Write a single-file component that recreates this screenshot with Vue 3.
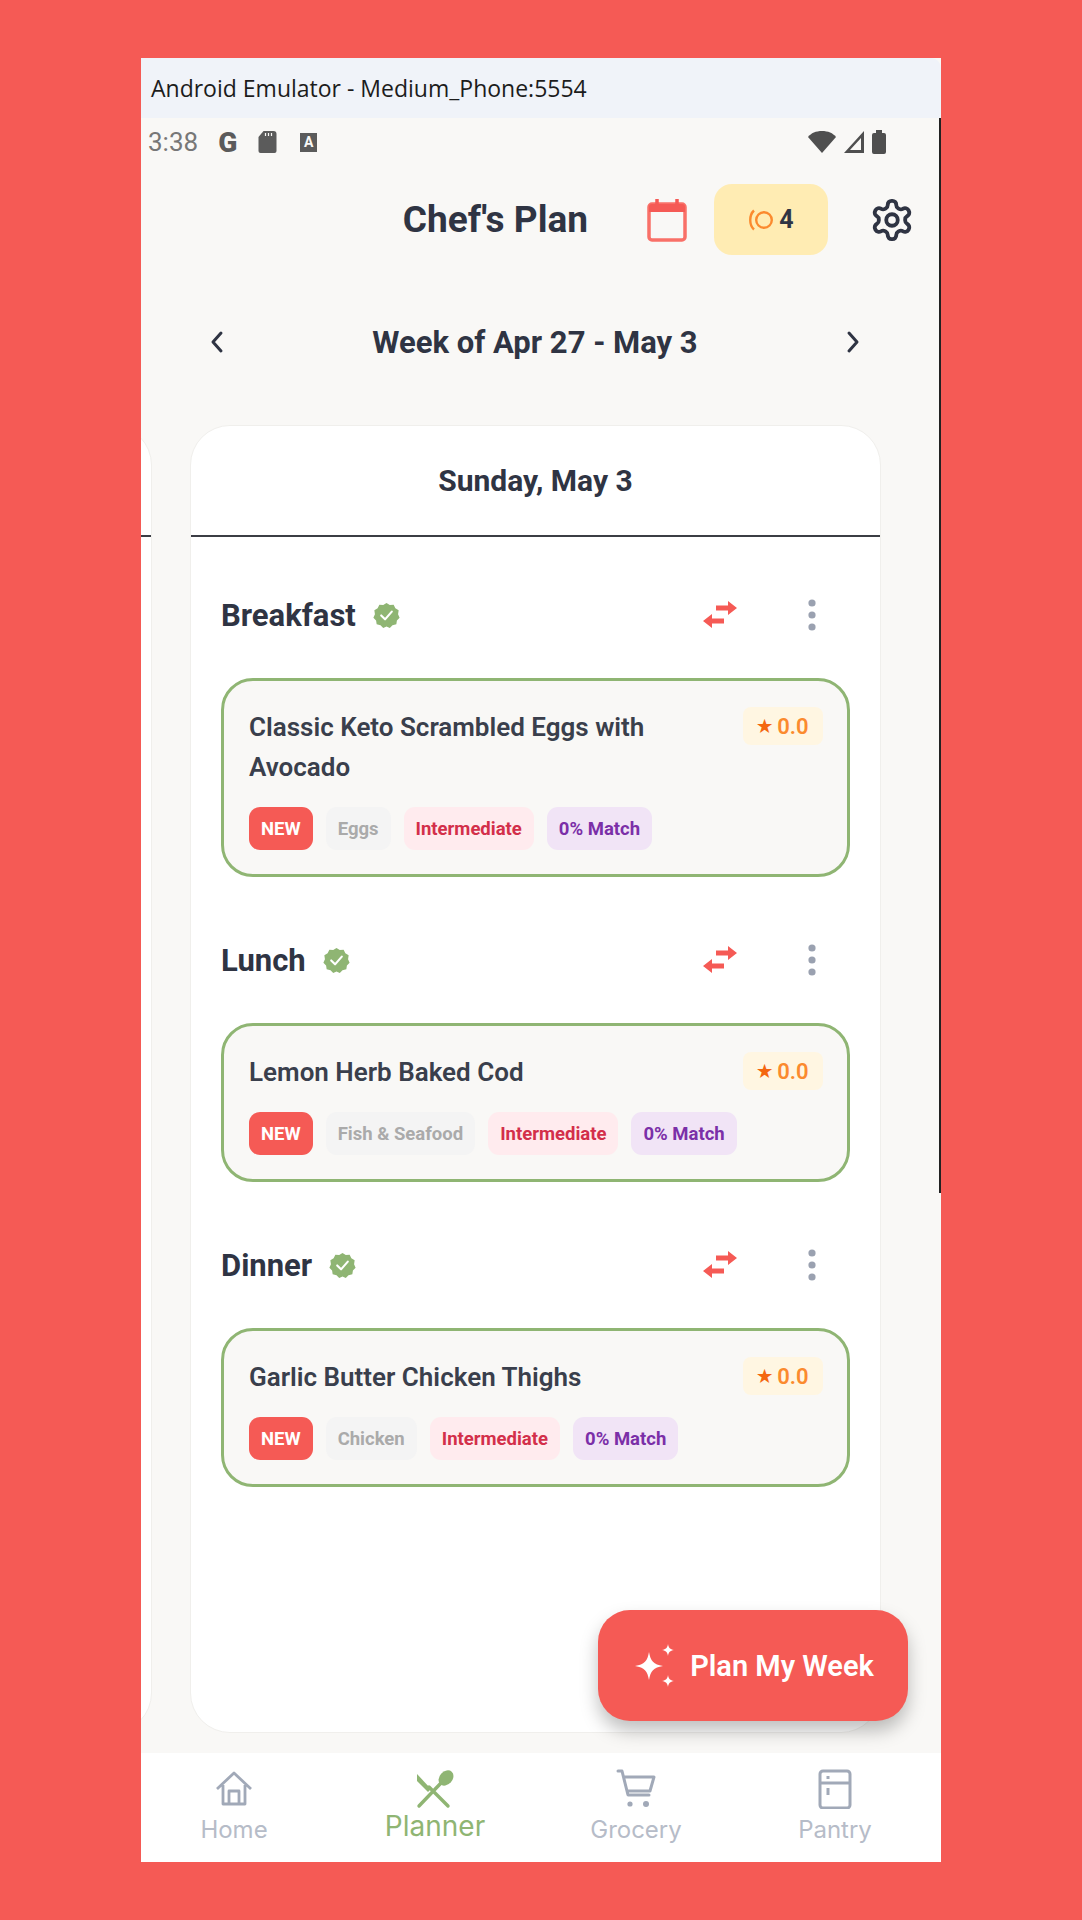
<template>
  <div class="screen">
    <div class="phone">
      <div class="titlebar">Android Emulator - Medium_Phone:5554</div>

      <div class="statusbar">
        <span class="clock">3:38</span>
        <span class="g">G</span>
        <svg class="st-sd" viewBox="0 0 20 24"><path d="M6 1h10a3 3 0 0 1 3 3v17a2 2 0 0 1-2 2H3a2 2 0 0 1-2-2V7z" fill="#5b5b5b" /><path d="M8 3v3M11 3v3M14 3v3" stroke="#f9f8f6" stroke-width="1.2" /></svg>
        <span class="st-a">A</span>
        <span class="st-right">
          <svg width="30" height="26" viewBox="0 0 30 26"><path d="M15 24 1 8C4 4 9 2 15 2s11 2 14 6z" fill="#4f4f4f" /></svg>
          <svg width="24" height="26" viewBox="0 0 24 26"><path d="M22 2v22H2zM19 9 8 21h11z" fill="#4f4f4f" fill-rule="evenodd" /></svg>
          <svg width="16" height="26" viewBox="0 0 16 26"><path d="M5 1h6v3h2a2 2 0 0 1 2 2v17a2 2 0 0 1-2 2H3a2 2 0 0 1-2-2V6a2 2 0 0 1 2-2h2z" fill="#4f4f4f" /></svg>
        </span>
      </div>

      <header class="header">
        <h1>Chef's Plan</h1>
        <svg class="cal" viewBox="0 0 40 44">
          <rect x="2" y="6" width="36" height="36" rx="3" fill="none" stroke="#f97068" stroke-width="3.5" />
          <path d="M2 9a3 3 0 0 1 3-3h30a3 3 0 0 1 3 3v5H2z" fill="#f55a55" />
          <path d="M10 1v7M30 1v7" stroke="#f55a55" stroke-width="3.5" />
        </svg>
        <div class="coins">
          <svg width="26" height="26" viewBox="0 0 26 26" fill="none" stroke="#fb8a2e" stroke-width="2.4">
            <circle cx="16" cy="13" r="7.8" />
            <path d="M6 3.5C1 8 1 18 6 22.5" />
          </svg>
          <span>4</span>
        </div>
        <svg class="gear" viewBox="0 0 24 24" fill="none" stroke="#2f3443" stroke-width="2" stroke-linecap="round" stroke-linejoin="round">
          <path d="M12.22 2h-.44a2 2 0 0 0-2 2v.18a2 2 0 0 1-1 1.73l-.43.25a2 2 0 0 1-2 0l-.15-.08a2 2 0 0 0-2.73.73l-.22.38a2 2 0 0 0 .73 2.73l.15.1a2 2 0 0 1 1 1.72v.51a2 2 0 0 1-1 1.74l-.15.09a2 2 0 0 0-.73 2.73l.22.38a2 2 0 0 0 2.73.73l.15-.08a2 2 0 0 1 2 0l.43.25a2 2 0 0 1 1 1.73V20a2 2 0 0 0 2 2h.44a2 2 0 0 0 2-2v-.18a2 2 0 0 1 1-1.73l.43-.25a2 2 0 0 1 2 0l.15.08a2 2 0 0 0 2.73-.73l.22-.39a2 2 0 0 0-.73-2.73l-.15-.08a2 2 0 0 1-1-1.74v-.5a2 2 0 0 1 1-1.74l.15-.09a2 2 0 0 0 .73-2.73l-.22-.38a2 2 0 0 0-2.73-.73l-.15.08a2 2 0 0 1-2 0l-.43-.25a2 2 0 0 1-1-1.73V4a2 2 0 0 0-2-2z" />
          <circle cx="12" cy="12" r="3" />
        </svg>
      </header>

      <div class="week">
        <svg width="16" height="24" viewBox="0 0 16 24" fill="none" stroke="#2f3443" stroke-width="3" stroke-linecap="round" stroke-linejoin="round"><path d="M12 3 4 12l8 9" /></svg>
        <span>Week of Apr 27 - May 3</span>
        <svg width="16" height="24" viewBox="0 0 16 24" fill="none" stroke="#2f3443" stroke-width="3" stroke-linecap="round" stroke-linejoin="round"><path d="m4 3 8 9-8 9" /></svg>
      </div>

      <div class="pager">
        <section class="day">
          <div class="day-head"></div>
        </section>
        <section class="day">
          <div class="day-head">Sunday, May 3</div>
          <div class="meals">
            <div v-for="m in meals" :key="m.slot" class="meal">
              <div class="meal-head">
                <span class="slot">{{ m.slot }}</span>
                <svg class="check" viewBox="0 0 28 28">
                  <path d="M14 1l3.4 2.2 4-.3 1.8 3.6 3.4 2.1-.6 4 1.6 3.7-2.8 2.9-.6 4-4 .9-2.8 2.9L14 25.4 10.600 27l-2.800-2.900-4-.9-.6-4L.4 16.300 2 12.600l-.6-4 3.400-2.100 1.800-3.600 4 .3z" fill="#8fb573" />
                  <path d="m8.500 14 4 4 7-8" fill="none" stroke="#fff" stroke-width="2.200" stroke-linecap="round" stroke-linejoin="round" />
                </svg>
                <svg class="swap" viewBox="0 0 36 28" fill="#f55a55">
                  <path d="M14 5.500h12V1l9 7-9 7v-4.500H14z" transform="translate(0 -1)" />
                  <path d="M22 17.500H10V13l-9 7 9 7v-4.500h12z" />
                </svg>
                <svg class="dots" viewBox="0 0 8 32" fill="#9aa1b0">
                  <circle cx="4" cy="4" r="3.600" /><circle cx="4" cy="16" r="3.600" /><circle cx="4" cy="28" r="3.600" />
                </svg>
              </div>
              <div class="recipe">
                <div class="recipe-top">
                  <div class="recipe-name">{{ m.name }}</div>
                  <div class="rating"><span class="star">★</span>0.0</div>
                </div>
                <div class="tags">
                  <span class="tag new">NEW</span>
                  <span class="tag cat">{{ m.cat }}</span>
                  <span class="tag lvl">Intermediate</span>
                  <span class="tag match">0% Match</span>
                </div>
              </div>
            </div>
          </div>
        </section>
      </div>

      <button class="fab">
        <svg width="46" height="46" viewBox="0 0 46 46" fill="#fff">
          <path d="M17 9c1.500 9 4.500 12.500 14 14-9.500 1.500-12.500 5-14 14-1.500-9-4.500-12.500-14-14 9.500-1.500 12.500-5 14-14z" />
          <path d="M36 1c.7 4 2 5.300 6 6-4 .7-5.300 2-6 6-.7-4-2-5.300-6-6 4-.7 5.300-2 6-6z" />
          <path d="M36 32c.7 4 2 5.300 6 6-4 .7-5.300 2-6 6-.7-4-2-5.300-6-6 4-.7 5.300-2 6-6z" />
        </svg>
        Plan My Week
      </button>

      <nav class="nav">
        <div class="tab">
          <svg width="40" height="40" viewBox="0 0 40 40" fill="none" stroke="#a1a9b8" stroke-width="2.800" stroke-linejoin="round">
            <path d="M3 20 20 4l17 16M9 16v19h22V16" />
            <path d="M15 35V22h10v13" />
          </svg>
          <span>Home</span>
        </div>
        <div class="tab active">
          <svg width="40" height="40" viewBox="0 0 40 40" fill="none">
            <path d="M2 5 16 20l-3 3L2 12z" fill="#8fb573" />
            <path d="m14 18 19 19M26 14 4 37" stroke="#8fb573" stroke-width="3.400" stroke-linecap="round" />
            <ellipse cx="31" cy="9" rx="6.500" ry="8.500" transform="rotate(42 31 9)" fill="#8fb573" />
          </svg>
          <span>Planner</span>
        </div>
        <div class="tab">
          <svg width="40" height="40" viewBox="0 0 40 40" fill="none" stroke="#a1a9b8" stroke-width="3" stroke-linejoin="round" stroke-linecap="round">
            <path d="M2 2h4l6 24h21M8 8h30l-4 14H12" />
            <circle cx="14" cy="35" r="2.600" fill="#a1a9b8" stroke="none" />
            <circle cx="30" cy="35" r="3" fill="#a1a9b8" stroke="none" />
          </svg>
          <span>Grocery</span>
        </div>
        <div class="tab">
          <svg width="40" height="40" viewBox="0 0 40 40" fill="none" stroke="#a1a9b8" stroke-width="3">
            <rect x="5" y="2" width="30" height="37" rx="3" />
            <path d="M5 14h30M13 7v3M13 19v7" />
          </svg>
          <span>Pantry</span>
        </div>
      </nav>

      <i class="edge"></i>
    </div>
  </div>
</template>

<script setup>
const meals = [
  { slot: 'Breakfast', name: 'Classic Keto Scrambled Eggs with Avocado', cat: 'Eggs' },
  { slot: 'Lunch', name: 'Lemon Herb Baked Cod', cat: 'Fish & Seafood' },
  { slot: 'Dinner', name: 'Garlic Butter Chicken Thighs', cat: 'Chicken' }
]
</script>

<style scoped>
.screen {
  width: 1082px;
  height: 1920px;
  box-sizing: border-box;
  padding: 58px 141px;
  background: #f55a55;
  font-family: Roboto, "Liberation Sans", sans-serif;
  color: #2f3443;
}

.phone {
  position: relative;
  width: 800px;
  height: 1804px;
  display: flex;
  flex-direction: column;
  background: #f9f8f6;
  overflow: hidden;
}

.titlebar {
  height: 60px;
  flex: none;
  display: flex;
  align-items: center;
  padding-left: 10px;
  background: #f0f3f9;
  border-top-right-radius: 10px;
  font-family: "Open Sans", sans-serif;
  font-size: 23px;
  color: #1c1c1c;
}

.statusbar {
  height: 48px;
  flex: none;
  display: flex;
  align-items: center;
  padding: 0 54px 0 7px;
  color: #5b5b5b;
}

.clock { font-size: 26px; color: #777; margin-right: 20px; }
.g { font-size: 28px; font-weight: 900; color: #5b5b5b; margin-right: 20px; }
.st-sd { width: 21px; height: 24px; margin-right: 22px; }
.st-a {
  width: 17px;
  height: 19px;
  background: #5b5b5b;
  color: #f9f8f6;
  font-size: 14px;
  font-weight: 700;
  line-height: 19px;
  text-align: center;
}
.st-right { margin-left: auto; display: flex; gap: 5px; align-items: center; }

.header {
  height: 71px;
  margin-top: 18px;
  flex: none;
  display: flex;
  align-items: center;
  justify-content: flex-end;
  padding-right: 29px;
}

.header h1 {
  margin: 0 59px 0 0;
  font-size: 37px;
  font-weight: 700;
}

.cal { width: 40px; height: 44px; margin-right: 27px; }

.coins {
  width: 114px;
  height: 71px;
  display: flex;
  align-items: center;
  justify-content: center;
  gap: 5px;
  margin-right: 44px;
  border-radius: 18px;
  background: #ffecb3;
  font-size: 25px;
  font-weight: 700;
}

.gear { width: 46px; height: 46px; margin: 0 -3px; }

.week {
  height: 40px;
  margin-top: 67px;
  flex: none;
  display: flex;
  align-items: center;
  justify-content: space-between;
  padding: 0 80px 0 68px;
  font-size: 31px;
  font-weight: 700;
}

.pager {
  flex: 1;
  margin-top: 63px;
  margin-bottom: 20px;
  display: flex;
  justify-content: flex-end;
  gap: 38px;
  padding-right: 60px;
  overflow: hidden;
}

.day {
  flex: 0 0 691px;
  box-sizing: border-box;
  background: #fff;
  border: 1px solid #f0efec;
  border-radius: 40px;
}

.day-head {
  height: 109px;
  display: flex;
  align-items: center;
  justify-content: center;
  border-bottom: 2px solid #3b3d44;
  font-size: 30px;
  font-weight: 700;
}

.meals {
  display: flex;
  flex-direction: column;
  gap: 38px;
  padding: 0 30px;
}

.meal-head {
  height: 141px;
  margin-bottom: 0;
  display: flex;
  align-items: center;
  padding-right: 34px;
}

.meal + .meal .meal-head { height: 90px; margin-bottom: 18px; }
.meal:first-child .meal-head { height: 90px; margin: 33px 0 18px; }

.slot { font-size: 31px; font-weight: 700; }
.check { width: 27px; height: 27px; margin-left: 17px; }
.swap { width: 36px; height: 28px; margin-left: auto; }
.dots { width: 8px; height: 32px; margin-left: 70px; }

.recipe {
  box-sizing: border-box;
  padding: 26px 24px 24px 25px;
  background: #f9f8f6;
  border: 3px solid #8fb573;
  border-radius: 32px;
}

.recipe-top {
  display: flex;
  justify-content: space-between;
  align-items: flex-start;
  gap: 50px;
}

.recipe-name {
  flex: 1;
  font-size: 26px;
  font-weight: 600;
  line-height: 40px;
  color: #3a3f4c;
}

.rating {
  flex: none;
  width: 80px;
  height: 38px;
  display: flex;
  align-items: center;
  justify-content: center;
  gap: 5px;
  border-radius: 8px;
  background: #fff6e2;
  color: #fb8a2e;
  font-size: 22px;
  font-weight: 600;
}

.star { font-size: 17px; color: #f4660f; }

.tags {
  display: flex;
  gap: 13px;
  margin-top: 20px;
}

.tag {
  height: 43px;
  display: flex;
  align-items: center;
  padding: 0 12px;
  border-radius: 11px;
  font-size: 18.500px;
  font-weight: 700;
}

.new { background: #f55a55; color: #fff; }
.cat { background: #f4f4f4; color: #aaa; }
.lvl { background: #ffebee; color: #d32f4a; }
.match { background: #f1e4f6; color: #7b2fa8; }

.fab {
  position: absolute;
  right: 33px;
  bottom: 141px;
  width: 310px;
  height: 111px;
  display: flex;
  align-items: center;
  justify-content: center;
  gap: 12px;
  border: 0;
  border-radius: 32px;
  background: #f55a55;
  box-shadow: 0 10px 18px rgba(0, 0, 0, 0.25);
  color: #fff;
  font-family: Roboto, sans-serif;
  font-size: 29px;
  font-weight: 600;
}

.nav {
  height: 109px;
  flex: none;
  display: grid;
  grid-template-columns: 186px 216px 186px 212px;
  background: #fff;
  font-family: Inter, sans-serif;
  font-size: 24px;
  color: #b6bcc8;
}

.tab {
  display: flex;
  flex-direction: column;
  align-items: center;
  justify-content: flex-start;
  padding-top: 16px;
  gap: 6px;
}

.active { color: #8fb573; font-size: 28px; gap: 0; }

.edge {
  position: absolute;
  right: 0;
  top: 60px;
  width: 2px;
  height: 1075px;
  background: #222;
}
</style>

<style>
body { margin: 0; }
</style>
